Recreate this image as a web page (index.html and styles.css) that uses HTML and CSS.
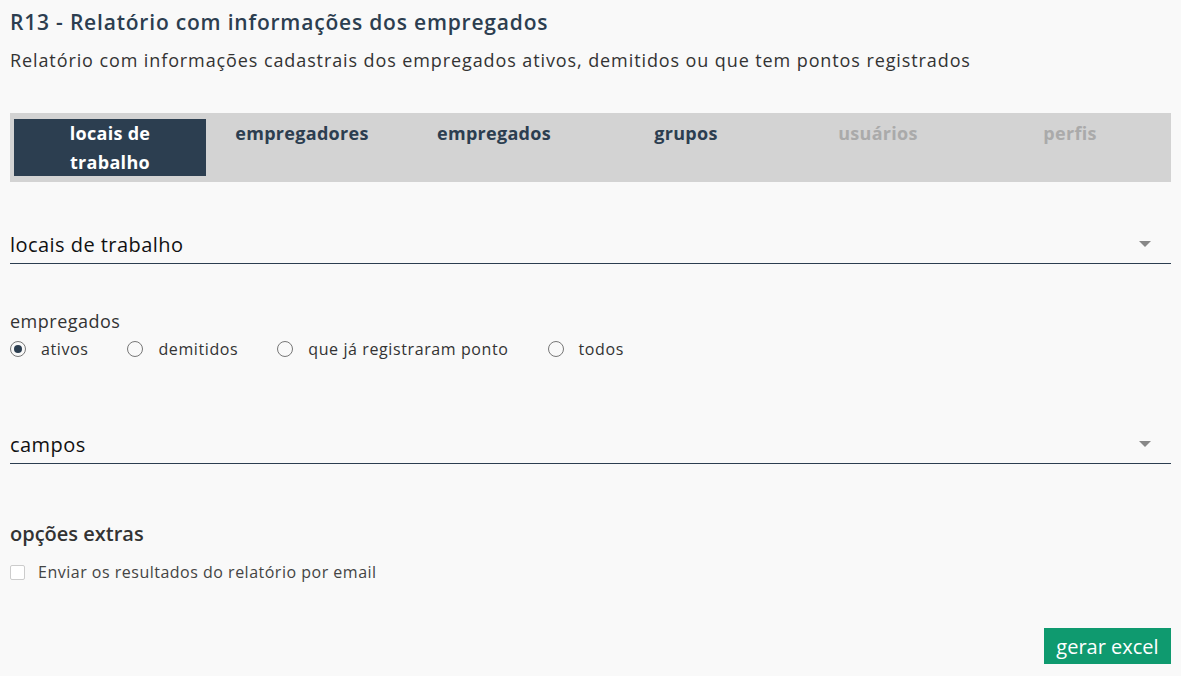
FILE: index.html
```html
<!DOCTYPE html>
<html lang="pt-BR">
<head>
    <meta charset="UTF-8">
    <meta name="viewport" content="width=device-width, initial-scale=1.0">
    <title>R13 - Relatório com informações dos empregados</title>
    <link rel="stylesheet" href="styles.css">
</head>
<body>
    <div class="pagina">
        <h1 class="titulo">R13 - Relatório com informações dos empregados</h1>
        <p class="descricao">Relatório com informações cadastrais dos empregados ativos, demitidos ou que tem pontos registrados</p>

        <div class="abas">
            <div class="aba ativa">locais de<br>trabalho</div>
            <div class="aba">empregadores</div>
            <div class="aba">empregados</div>
            <div class="aba">grupos</div>
            <div class="aba desabilitada">usuários</div>
            <div class="aba desabilitada">perfis</div>
        </div>

        <div class="seletor seletor-locais">
            <span>locais de trabalho</span>
            <span class="seta"></span>
        </div>

        <div class="grupo-radios">
            <div class="rotulo">empregados</div>
            <div class="radios">
                <label class="radio"><span class="bolinha marcada"></span>ativos</label>
                <label class="radio"><span class="bolinha"></span>demitidos</label>
                <label class="radio"><span class="bolinha"></span>que já registraram ponto</label>
                <label class="radio"><span class="bolinha"></span>todos</label>
            </div>
        </div>

        <div class="seletor seletor-campos">
            <span>campos</span>
            <span class="seta"></span>
        </div>

        <div class="extras">
            <h2 class="subtitulo">opções extras</h2>
            <label class="checkbox"><span class="caixa"></span>Enviar os resultados do relatório por email</label>
        </div>

        <div class="acoes">
            <button class="btn-excel">gerar excel</button>
        </div>
    </div>
</body>
</html>
```

FILE: styles.css
```css
body {
    font-family: "Open Sans", Roboto, Arial, sans-serif;
    background-color: #f9f9f9;
    margin: 0;
    padding: 0 10px;
    color: #333;
}

.titulo {
    margin: 0;
    padding-top: 8px;
    font-size: 21px;
    font-weight: 600;
    line-height: 28px;
    letter-spacing: 0.8px;
    color: #2c3e50;
}

.descricao {
    margin: 11px 0 0;
    font-size: 18px;
    line-height: 26px;
    letter-spacing: 0.9px;
    color: #333;
}

.abas {
    display: flex;
    margin-top: 40px;
    padding: 6px 4px;
    background-color: #d3d3d3;
    height: 57px;
}

.aba {
    width: 192px;
    text-align: center;
    font-weight: bold;
    font-size: 18px;
    line-height: 29px;
    letter-spacing: 0.3px;
    color: #2c3e50;
}

.aba.ativa {
    background-color: #2c3e50;
    color: #fff;
}

.aba.desabilitada {
    color: #aaa;
}

.seletor {
    display: flex;
    justify-content: space-between;
    align-items: center;
    border-bottom: 1px solid #2c3e50;
    font-size: 20px;
    letter-spacing: 0.45px;
    color: #111;
    height: 38px;
    padding-right: 20px;
}

.seletor-locais {
    margin-top: 43px;
}

.seletor-campos {
    margin-top: 65px;
}

.seta {
    width: 0;
    height: 0;
    border-left: 6px solid transparent;
    border-right: 6px solid transparent;
    border-top: 6px solid #888;
}

.grupo-radios {
    margin-top: 44px;
}

.rotulo {
    font-size: 18px;
    line-height: 26px;
    letter-spacing: 0.5px;
    color: #333;
}

.radios {
    display: flex;
    margin-top: 4px;
}

.radio {
    display: flex;
    align-items: center;
    font-size: 16px;
    line-height: 22px;
    letter-spacing: 0.6px;
    color: #333;
    margin-right: 39px;
}

.bolinha {
    width: 16px;
    height: 16px;
    border: 1px solid #777;
    border-radius: 50%;
    margin-right: 15px;
    box-sizing: border-box;
    position: relative;
}

.bolinha.marcada::after {
    content: "";
    position: absolute;
    left: 3px;
    top: 3px;
    width: 8px;
    height: 8px;
    border-radius: 50%;
    background-color: #2c3e50;
}

.extras {
    margin-top: 57px;
}

.subtitulo {
    margin: 0;
    font-size: 20px;
    font-weight: 600;
    line-height: 26px;
    color: #333;
}

.checkbox {
    display: flex;
    align-items: center;
    margin-top: 14px;
    font-size: 16px;
    line-height: 22px;
    letter-spacing: 0.5px;
    color: #444;
}

.caixa {
    width: 15px;
    height: 15px;
    border: 1px solid #ccc;
    border-radius: 2px;
    margin-right: 13px;
    box-sizing: border-box;
    background-color: #fff;
}

.acoes {
    display: flex;
    justify-content: flex-end;
    margin-top: 45px;
}

.btn-excel {
    width: 127px;
    height: 36px;
    padding: 0;
    background-color: #0f9a6f;
    color: #fff;
    border: none;
    font-family: "Open Sans", Roboto, Arial, sans-serif;
    font-size: 20px;
    cursor: pointer;
}
```
